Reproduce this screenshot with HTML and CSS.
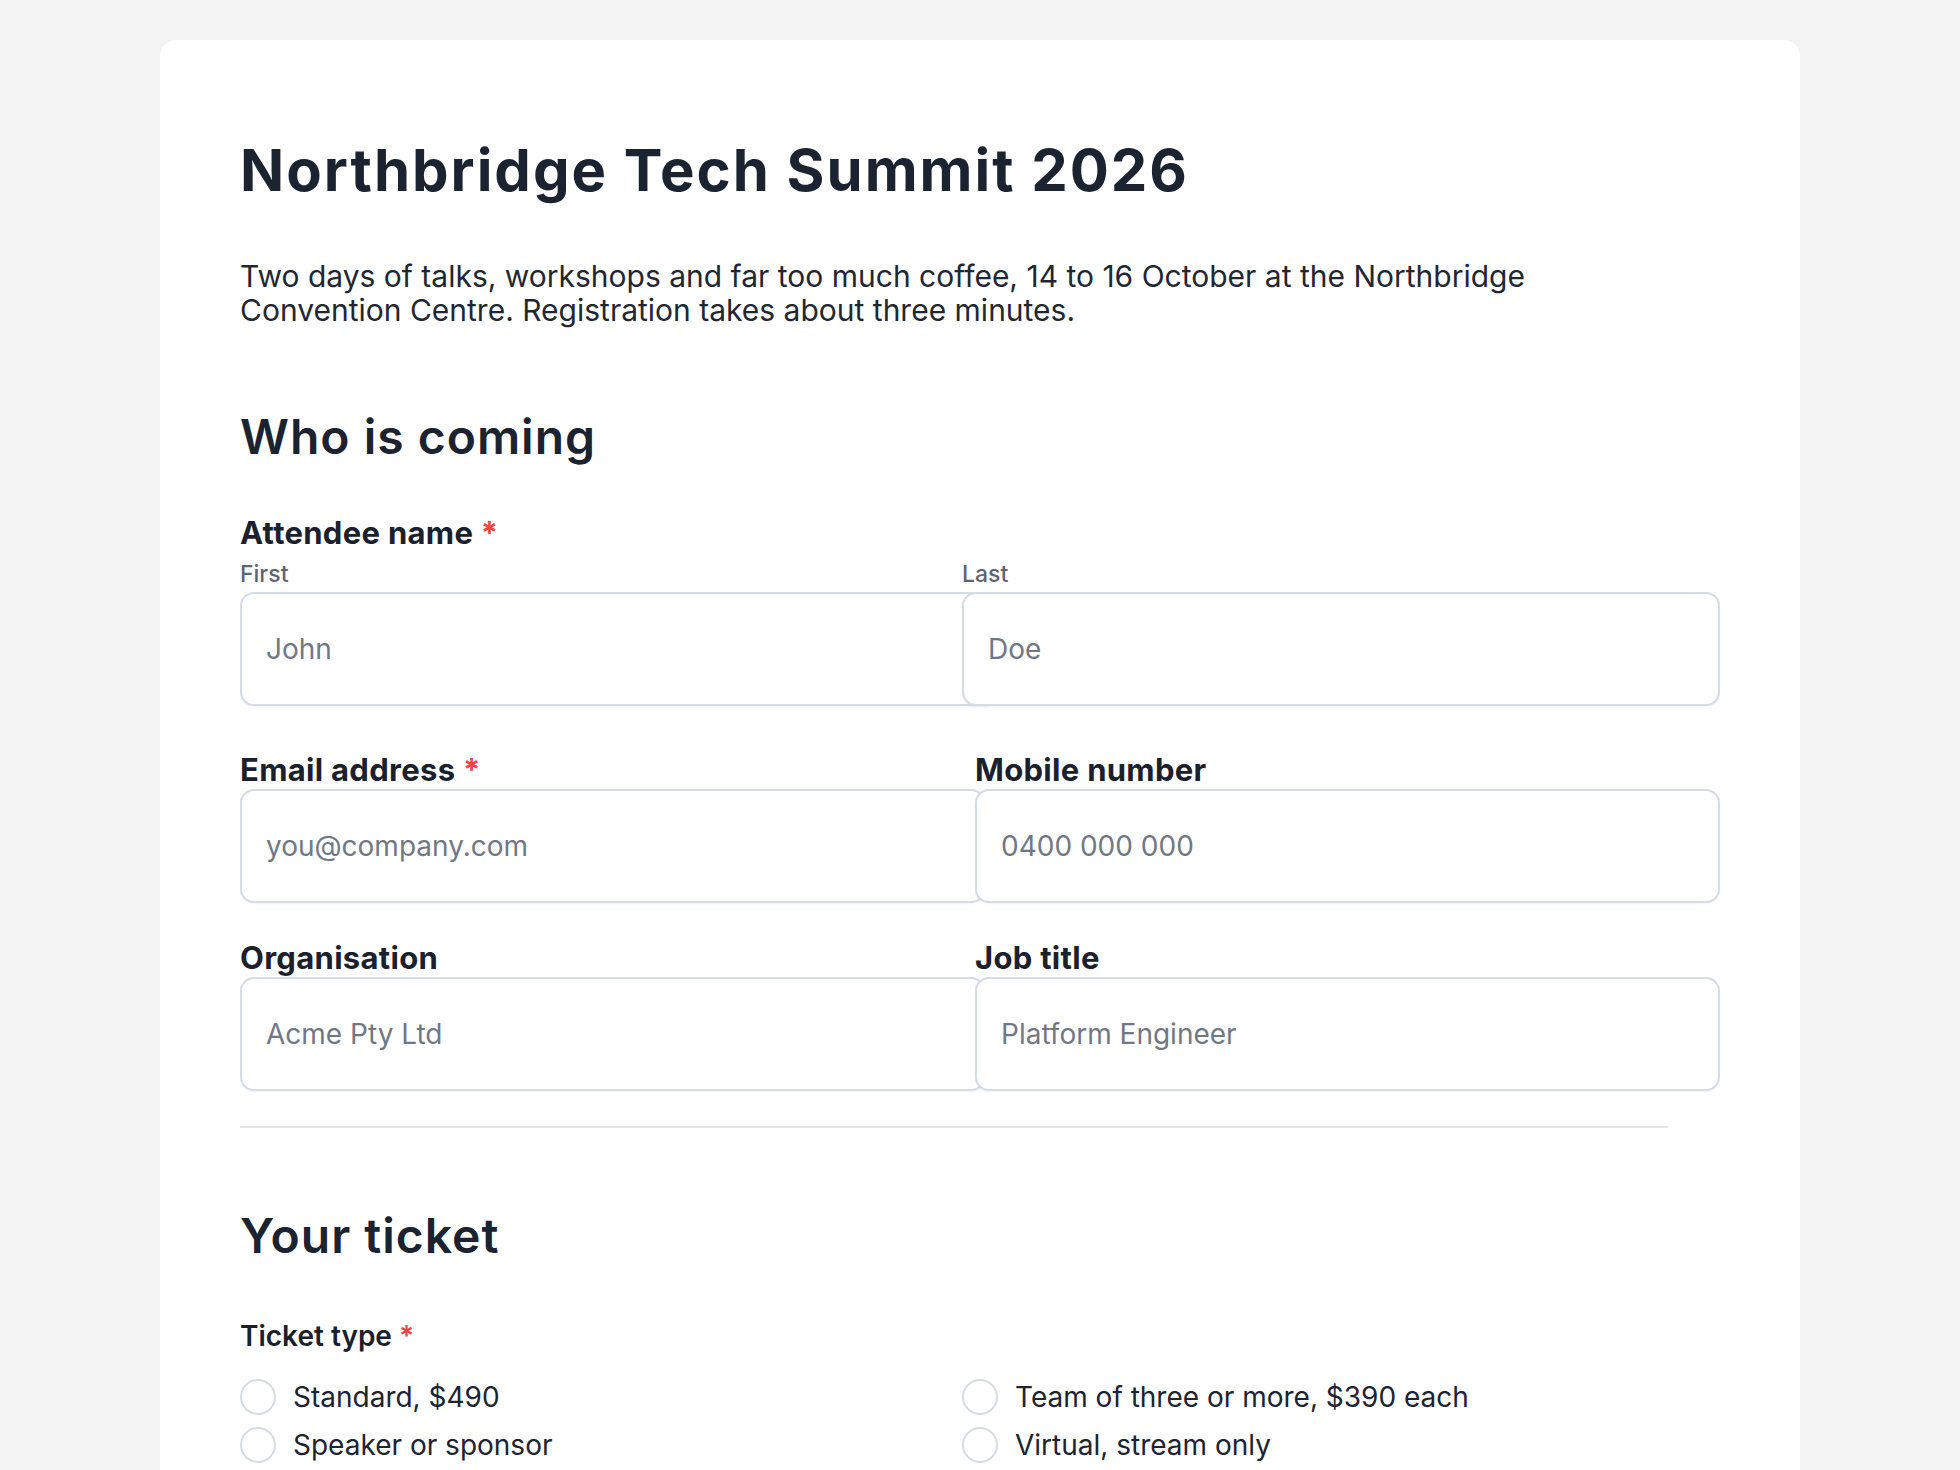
FILE: index.html
```html
<!DOCTYPE html>
<html lang="en">
<head>
    <meta charset="UTF-8">
    <meta name="viewport" content="width=device-width, initial-scale=1.0">
    <title>Northbridge Tech Summit 2026 - Registration</title>
    <link rel="stylesheet" href="styles.css">
</head>
<body>
    <main class="card">
        <!-- Intro -->
        <header class="intro">
            <h1 class="title">Northbridge Tech Summit 2026</h1>
            <p class="lead">Two days of talks, workshops and far too much coffee, 14 to 16 October at the Northbridge Convention Centre. Registration takes about three minutes.</p>
        </header>

        <form class="form" id="register-form">
            <!-- Who is coming -->
            <section class="section section-first">
                <h2 class="section-title">Who is coming</h2>

                <div class="field field-name">
                    <span class="label">Attendee name <span class="req">*</span></span>
                    <div class="name-row">
                        <label class="sub">
                            <span class="sub-label">First</span>
                            <input class="input" type="text" placeholder="John">
                        </label>
                        <label class="sub">
                            <span class="sub-label">Last</span>
                            <input class="input" type="text" placeholder="Doe">
                        </label>
                    </div>
                </div>

                <div class="row">
                    <label class="field">
                        <span class="label">Email address <span class="req">*</span></span>
                        <input class="input" type="email" placeholder="you@company.com">
                    </label>
                    <label class="field">
                        <span class="label">Mobile number</span>
                        <input class="input" type="tel" placeholder="0400 000 000">
                    </label>
                </div>

                <div class="row row-last">
                    <label class="field">
                        <span class="label">Organisation</span>
                        <input class="input" type="text" placeholder="Acme Pty Ltd">
                    </label>
                    <label class="field">
                        <span class="label">Job title</span>
                        <input class="input" type="text" placeholder="Platform Engineer">
                    </label>
                </div>
            </section>

            <hr class="divider">

            <!-- Your ticket -->
            <section class="section">
                <h2 class="section-title section-title-ticket">Your ticket</h2>

                <div class="field">
                    <span class="label label-small">Ticket type <span class="req">*</span></span>
                    <div class="radio-grid">
                        <label class="radio"><input type="radio" name="ticket" value="standard"> Standard, $490</label>
                        <label class="radio"><input type="radio" name="ticket" value="team"> Team of three or more, $390 each</label>
                        <label class="radio"><input type="radio" name="ticket" value="speaker"> Speaker or sponsor</label>
                        <label class="radio"><input type="radio" name="ticket" value="virtual"> Virtual, stream only</label>
                    </div>
                </div>
            </section>
        </form>
    </main>
</body>
</html>
```

FILE: styles.css
```css
/* Global Styles */
body {
    margin: 0;
    padding: 40px 160px 0;
    background-color: #f3f3f3;
    font-family: Inter, "Noto Sans", Arial, sans-serif;
    color: #1c2331;
}

/* Card */
.card {
    background-color: #fff;
    border-radius: 16px;
    padding: 95px 80px 120px;
}

.title {
    margin: 0 0 55px;
    font-size: 58px;
    line-height: 70px;
    font-weight: 700;
    letter-spacing: 2px;
    color: #1b2230;
}

.lead {
    margin: 0;
    max-width: 1340px;
    font-size: 30px;
    line-height: 33.6px;
    color: #1f2733;
}

/* Form */
.form {
    max-width: 1428px;
}

.section-title {
    margin: 82px 0 53px;
    font-size: 48px;
    line-height: 56px;
    font-weight: 600;
    letter-spacing: 1px;
    color: #1b2230;
}

.section-title-ticket {
    margin: 80px 0 60px;
}

.field {
    display: block;
}

.label {
    display: block;
    margin-bottom: 4px;
    font-size: 31px;
    line-height: 30px;
    font-weight: 700;
    letter-spacing: 0.3px;
    color: #1a202c;
}

.req {
    color: #ef4444;
}

.field-name {
    margin-bottom: 49px;
}

.field-name > .label {
    margin-bottom: 15px;
}

.name-row {
    display: grid;
    grid-template-columns: 1fr 1fr;
    gap: 16px;
}

.sub {
    display: block;
}

.sub-label {
    display: block;
    margin-bottom: 7px;
    font-size: 23px;
    line-height: 22px;
    font-weight: 500;
    color: #5c6573;
}

.row {
    display: grid;
    grid-template-columns: 1fr 1fr;
    gap: 42px;
    margin-bottom: 40px;
}

.row-last {
    margin-bottom: 0;
}

/* inputs keep content-box sizing, so they run a little past their column */
.input {
    display: block;
    box-sizing: content-box;
    width: 100%;
    margin: 0;
    padding: 40px 24px;
    border: 2px solid #d6dce5;
    border-radius: 14px;
    background-color: #fff;
    box-shadow: 0 1px 2px rgba(16, 24, 40, 0.05);
    font-family: Inter, "Noto Sans", Arial, sans-serif;
    font-size: 28px;
    line-height: 30px;
    color: #1c2331;
    outline: none;
}

.input::placeholder {
    color: #717885;
}

.divider {
    margin: 35px 0 0;
    border: none;
    border-top: 2px solid #dfe3ea;
}

/* Ticket type */
.label-small {
    margin-bottom: 30px;
    font-size: 28px;
    line-height: 25px;
    font-weight: 600;
    letter-spacing: 0;
}

.radio-grid {
    display: grid;
    grid-template-columns: 1fr 1fr;
    gap: 12px 16px;
}

.radio {
    display: flex;
    align-items: center;
    gap: 17px;
    font-size: 28px;
    line-height: 36px;
    color: #1c2331;
}

.radio input {
    appearance: none;
    box-sizing: border-box;
    width: 36px;
    height: 36px;
    margin: 0;
    border: 2px solid #d6dce5;
    border-radius: 50%;
    background-color: #fff;
}
```
